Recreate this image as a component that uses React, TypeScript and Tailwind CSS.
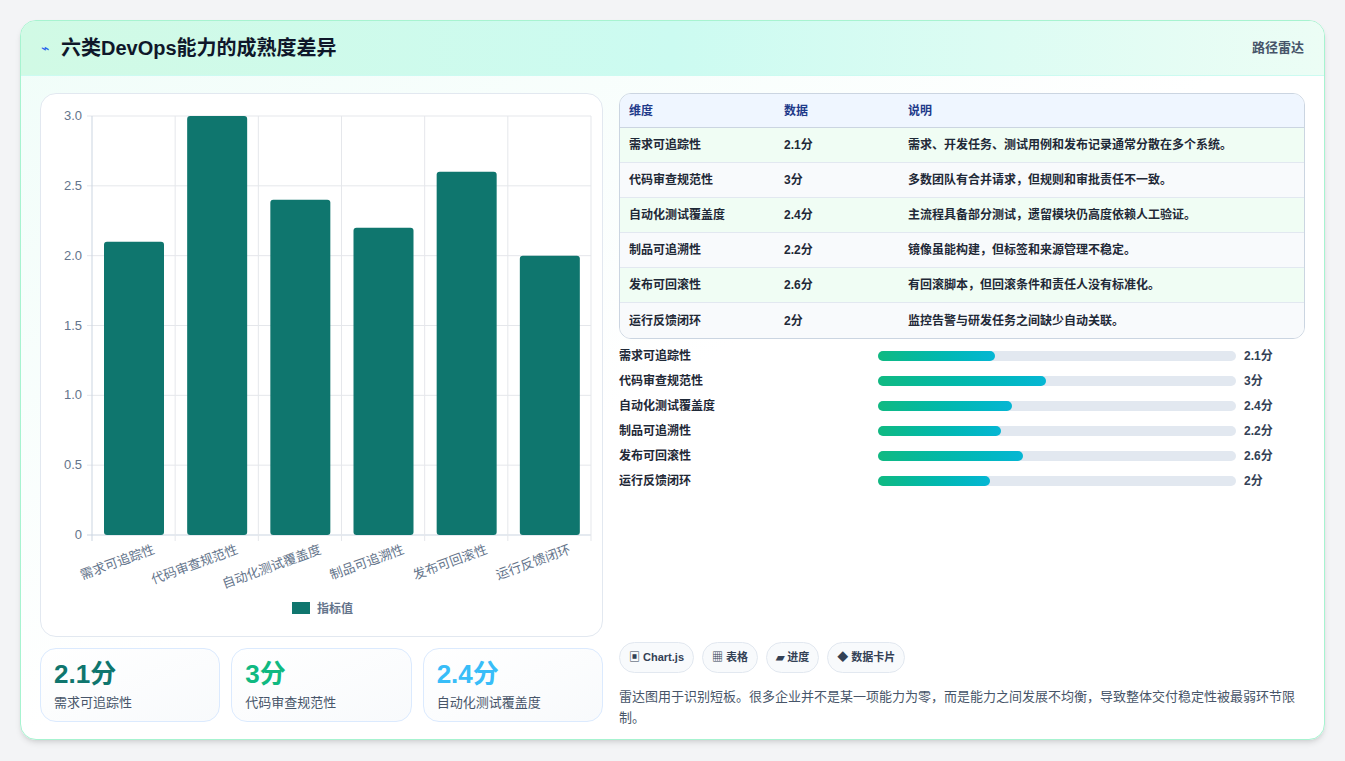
const rows = [
  { name: "需求可追踪性", v: 2.1, note: "需求、开发任务、测试用例和发布记录通常分散在多个系统。" },
  { name: "代码审查规范性", v: 3, note: "多数团队有合并请求，但规则和审批责任不一致。" },
  { name: "自动化测试覆盖度", v: 2.4, note: "主流程具备部分测试，遗留模块仍高度依赖人工验证。" },
  { name: "制品可追溯性", v: 2.2, note: "镜像虽能构建，但标签和来源管理不稳定。" },
  { name: "发布可回滚性", v: 2.6, note: "有回滚脚本，但回滚条件和责任人没有标准化。" },
  { name: "运行反馈闭环", v: 2, note: "监控告警与研发任务之间缺少自动关联。" },
];

const font = { fontFamily: '"Liberation Sans", "Noto Sans CJK SC", sans-serif' };

function Chart() {
  const x0 = 51;
  const x1 = 550;
  const yTop = 22;
  const yBot = 441;
  const cw = (x1 - x0) / 6;
  const y = (v: number) => yBot - (v / 3) * (yBot - yTop);
  return (
    <svg width="562" height="543" viewBox="0 0 562 543" className="block">
      {[0, 0.5, 1, 1.5, 2, 2.5, 3].map((t) => (
        <g key={t}>
          <line x1={x0 - 5} x2={x1} y1={y(t)} y2={y(t)} stroke={t === 0 ? "#cbd5e1" : "#e5e7eb"} />
          <text x={x0 - 10} y={y(t) + 4} textAnchor="end" fontSize="13" fill="#64748b">
            {t === 0 ? "0" : t.toFixed(1)}
          </text>
        </g>
      ))}
      {[0, 1, 2, 3, 4, 5, 6].map((i) => (
        <line key={i} x1={x0 + i * cw} x2={x0 + i * cw} y1={yTop} y2={yBot + 6} stroke={i === 0 ? "#cbd5e1" : "#e5e7eb"} />
      ))}
      {rows.map((r, i) => (
        <g key={r.name}>
          <rect x={x0 + i * cw + 12} y={y(r.v)} width="60" height={yBot - y(r.v)} rx="3" fill="#0f766e" />
          <text
            x={x0 + i * cw + cw / 2 + 22}
            y={yBot + 18}
            textAnchor="end"
            fontSize="13"
            fill="#64748b"
            transform={`rotate(-20 ${x0 + i * cw + cw / 2 + 22} ${yBot + 18})`}
          >
            {r.name}
          </text>
        </g>
      ))}
      <rect x="251" y="508" width="18" height="12" fill="#0f766e" />
      <text x="276" y="519" fontSize="12" fontWeight="bold" fill="#64748b">指标值</text>
    </svg>
  );
}

export default function App() {
  const stats = [
    { v: "2.1分", name: "需求可追踪性", c: "text-[#0f766e]" },
    { v: "3分", name: "代码审查规范性", c: "text-[#10b981]" },
    { v: "2.4分", name: "自动化测试覆盖度", c: "text-[#38bdf8]" },
  ];
  return (
    <div className="min-h-[761px] bg-[#f3f4f6] p-5" style={font}>
      <div className="h-[720px] overflow-hidden rounded-2xl border border-[#a7f3d0] bg-gradient-to-br from-[#f0fdf9] via-white to-white shadow-md">
        <div className="flex h-[55px] items-center justify-between border-b border-[#ccfbf1] bg-gradient-to-r from-[#d1fae5] via-[#ccfbf1] to-[#ecfdf5] px-5">
          <div className="flex items-center gap-3">
            <span className="text-sm text-[#2563eb]">⌁</span>
            <span className="text-xl font-bold text-[#0f172a]">六类DevOps能力的成熟度差异</span>
          </div>
          <span className="text-[13px] font-bold text-[#475569]">路径雷达</span>
        </div>
        <div className="flex gap-4 px-[19px] pt-[17px]">
          <div className="w-[563px] shrink-0">
            <div className="h-[544px] rounded-2xl border border-[#e2e8f0] bg-white">
              <Chart />
            </div>
            <div className="mt-[11px] grid grid-cols-3 gap-[11px]">
              {stats.map((s) => (
                <div key={s.name} className="h-[74px] rounded-2xl border border-[#dbeafe] bg-gradient-to-br from-white to-[#f8fafc] px-[13px] pt-2">
                  <div className={`text-[26px] font-bold leading-[34px] ${s.c}`}>{s.v}</div>
                  <div className="mt-0.5 text-[13px] text-[#475569]">{s.name}</div>
                </div>
              ))}
            </div>
          </div>
          <div className="w-[688px]">
            <div className="overflow-hidden rounded-xl border border-[#cbd5e1] text-[12px] font-bold">
              <div className="flex h-[34px] items-center border-b border-[#cbd5e1] bg-[#eff6ff] text-[#1e3a8a]">
                <span className="w-[164px] pl-[9px]">维度</span>
                <span className="w-[124px]">数据</span>
                <span>说明</span>
              </div>
              {rows.map((r, i) => (
                <div key={r.name} className={`flex h-[35px] items-center text-[#1f2937] ${i < 5 ? "border-b border-[#e2e8f0]" : ""} ${i % 2 === 0 ? "bg-[#f0fdf4]" : "bg-[#f8fafc]"}`}>
                  <span className="w-[164px] pl-[9px]">{r.name}</span>
                  <span className="w-[124px]">{r.v}分</span>
                  <span>{r.note}</span>
                </div>
              ))}
            </div>
            <div className="mt-[9px] flex flex-col gap-[9px]">
              {rows.map((r) => (
                <div key={r.name} className="flex h-4 items-center text-[12px] font-bold text-[#1f2937]">
                  <span className="w-[259px]">{r.name}</span>
                  <div className="h-[10px] w-[358px] rounded-full bg-[#e2e8f0]">
                    <div className="h-full rounded-full bg-gradient-to-r from-[#10b981] to-[#06b6d4]" style={{ width: `${(r.v / 6.4) * 100}%` }} />
                  </div>
                  <span className="ml-2 text-[#334155]">{r.v}分</span>
                </div>
              ))}
            </div>
            <div className="mt-[153px] flex gap-2 text-[11px] font-bold text-[#334155]">
              {["▣ Chart.js", "▦ 表格", "▰ 进度", "◆ 数据卡片"].map((c) => (
                <span key={c} className="rounded-full border border-[#e2e8f0] bg-[#f8fafc] px-[9px] py-[6px]">{c}</span>
              ))}
            </div>
            <p className="mt-[13px] text-[13px] leading-[21px] text-[#475569]">
              雷达图用于识别短板。很多企业并不是某一项能力为零，而是能力之间发展不均衡，导致整体交付稳定性被最弱环节限制。
            </p>
          </div>
        </div>
      </div>
    </div>
  );
}
